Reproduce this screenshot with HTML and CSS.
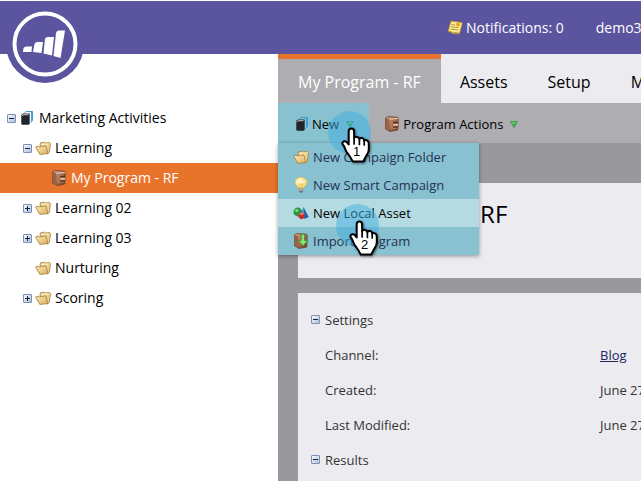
FILE: index.html
```html
<!DOCTYPE html>
<html lang="en">
<head>
<meta charset="utf-8">
<title>My Program - RF</title>
<link rel="stylesheet" href="styles.css">
</head>
<body>
<svg class="defs" width="0" height="0" aria-hidden="true">
  <defs>
    <linearGradient id="g-box" x1="0" y1="0" x2="1" y2="1"><stop offset="0" stop-color="#fff"/><stop offset="1" stop-color="#a9b9d4"/></linearGradient>
    <linearGradient id="g-folder" x1="0" y1="0" x2="1" y2="1"><stop offset="0" stop-color="#fdf0bd"/><stop offset="1" stop-color="#d9ad5c"/></linearGradient>
    <linearGradient id="g-case" x1="0" y1="0" x2="1" y2="1"><stop offset="0" stop-color="#d9a582"/><stop offset="1" stop-color="#6b3a25"/></linearGradient>
    <radialGradient id="g-bulb" cx=".4" cy=".35" r=".7"><stop offset="0" stop-color="#fffde0"/><stop offset="1" stop-color="#f5d35a"/></radialGradient>
    <symbol id="minus" viewBox="0 0 9 9"><rect x=".5" y=".5" width="8" height="8" rx=".5" fill="url(#g-box)" stroke="#7c92b5"/><path d="M2 4.5h5" stroke="#10243f"/></symbol>
    <symbol id="plus" viewBox="0 0 9 9"><rect x=".5" y=".5" width="8" height="8" rx=".5" fill="url(#g-box)" stroke="#7c92b5"/><path d="M2 4.5h5M4.5 2v5" stroke="#10243f"/></symbol>
    <symbol id="books" viewBox="0 0 12 14"><path d="M4 2V1.500Q4.300.5 5.500.5H11.500V9.500L9.500 11.500" fill="none" stroke="#3d9bd6"/><path d="M10.800.7V10" stroke="#3d9bd6" stroke-width="1.400"/><path d="M.3 4.500Q.5 2.500 2.500 2.500H8.700V12.300Q8.700 13.700 7.500 13.700H1.500Q.3 13.700.3 12.500Z" fill="#222528"/><path d="M1.300 4.900Q1.500 3.700 2.800 3.700H7.500" fill="none" stroke="#dfe5e8" stroke-width=".9"/></symbol>
    <symbol id="folder" viewBox="0 0 16 14"><path d="M5 4L5.500 1.800 9.500 1.200 10.500 2 14.500 1.500 15.500 2.500 14.300 11.500 12.500 12.800 6 8Z" fill="#ecd395" stroke="#a37b36" stroke-width=".8"/><path d="M.6 6L3 5.200 4.300 6 10.800 4.800 13 12.600 4.800 13.400Z" fill="url(#g-folder)" stroke="#a37b36" stroke-width=".8"/><path d="M6.500 3.500L13.500 3" stroke="#fff4c8"/></symbol>
    <symbol id="case" viewBox="0 0 14 16">
      <path d="M.6 2L2.500.6 12.500 1.200 13.300 2.300 12.800 14 5 15.500.6 13Z" fill="url(#g-case)" stroke="#6b412d" stroke-width=".8"/>
      <path d="M1 2.300L4.200 3.300V14.800L1 13Z" fill="#9a6347"/>
      <path d="M4.500 3.200L13 2.500" stroke="#f3d2b8"/>
      <path d="M5.500 5H12.300V7.200H9Q7.800 8.700 9 10H12.300V12.500L5.500 13.500Z" fill="#b47a5a"/>
      <path d="M8.300 5.800H13V7.300H8.300ZM8.300 10.300H13V11.800H8.300Z" fill="#50281a"/>
      <path d="M7.500 8.800Q7.700 7.400 9 7.400H13.600V10.200H9Q7.700 10.200 7.500 8.800Z" fill="#e9bfa0" stroke="#6b3a25" stroke-width=".6"/>
    </symbol>
    <symbol id="caret" viewBox="0 0 8 7"><path d="M.5.500H7.500L4 6.500Z" fill="#5cc95a" stroke="#2f9346" stroke-width=".8"/><path d="M5.800 1.500L4 5.500 3.300 4Z" fill="#258c3c"/></symbol>
    <symbol id="bulb" viewBox="0 0 16 16"><path d="M5.300 11.300C5.300 9.500 2 8.200 2 5.300A6 5 0 0 1 14 5.300C14 8.200 10.700 9.500 10.700 11.300Z" fill="url(#g-bulb)" stroke="#dcbc50" stroke-width=".7"/><path d="M7 11L6.300 6.500 8 7.800 9.700 6.500 9 11" fill="none" stroke="#e0ae3f" stroke-width=".6"/><path d="M5.500 11.500H10.500V14L9 15.700H7L5.500 14Z" fill="#72787d"/><path d="M5.500 12.900H10.500" stroke="#d5dadd"/></symbol>
    <symbol id="shapes" viewBox="0 0 16 14"><path d="M10.500 1L15.700 11 11.500 13 7.500 10.500Z" fill="#255ea8"/><path d="M10.500 1L11.500 13 7.500 10.500Z" fill="#5c98d6"/><circle cx="4.800" cy="6" r="4.400" fill="#27984a"/><circle cx="3.700" cy="4.500" r="1.500" fill="#8bdb84"/><path d="M5.500 7.800L8.500 6.500 11.500 7.800V11.300L8.500 13.500 5.500 11.500Z" fill="#c72b29"/><path d="M5.500 7.800L8.500 6.500 11.500 7.800 8.500 9.300Z" fill="#f57662"/></symbol>
    <symbol id="import" viewBox="0 0 14 16"><path d="M.6 2L2.500.6 12.500 1.200 13.300 2.300 12.800 14 5 15.500.6 13Z" fill="url(#g-case)" stroke="#6b412d" stroke-width=".8"/><path d="M1 2.300L4.200 3.300V14.800L1 13Z" fill="#9a6347"/><path d="M7.300 1.200H10.500V7.500H13.700L9 12.800 4.300 7.500H7.300Z" fill="#8be56f" stroke="#2c8c31" stroke-width=".7"/></symbol>
    <symbol id="note" viewBox="0 0 16 15"><path d="M4 1L14.500 2.500Q15.700 3 15 4.500L12.500 13.300 1 11.500Q1.700 10 2 8Z" fill="#fbea8c" stroke="#b98d2c" stroke-width=".8"/><path d="M.8 11.500Q4 11.200 6 13.500L12.500 13.800" fill="#fff7c5" stroke="#b98d2c" stroke-width=".8"/><path d="M4.500 4.500L8 5M4 6.700L11.500 7.700M3.500 9L11 10" stroke="#a88535" stroke-width=".8"/><circle cx="11" cy="4.500" r="2" fill="#f29a38"/></symbol>
    <symbol id="hand" viewBox="0 0 30 38">
      <path d="M7.700 4.500Q7.700 1.500 10.400 1.500T13.100 4.500V11Q14 9.600 16 9.900 18 10.100 18.400 12 19.500 10.500 21.300 11 23 11.500 23.200 13.500 24.300 12.500 26 13.300 27.800 14.200 27.800 16.500V22Q27.800 25 26 27.500 24.500 30 22.300 34.500H11.700Q9.500 30 7.500 27.500 5 25 4 21.500 3.300 19 1.800 17.500 .8 15.500 2.500 14.500 4.700 13.500 6.500 15.800L7.700 17.500Z" fill="#fff" stroke="#000" stroke-width="2" stroke-linejoin="round"/>
      <path d="M13.100 11V17M18.400 12V17.500M23.200 13.500V18" stroke="#000" stroke-width="1.700" stroke-linecap="round"/>
    </symbol>
  </defs>
</svg>

<header class="topbar">
  <a class="logo" href="#" aria-label="Home">
    <svg viewBox="0 0 78 78" aria-hidden="true"><circle cx="39" cy="39" r="39" fill="#5b549f"/><circle cx="39" cy="39" r="30.500" fill="none" stroke="#fff" stroke-width="4"/><path d="M17.500 43Q18.500 41.500 20.500 41.500H26L25.500 47H17Z M28.500 39Q29 37 31.500 37H37L35.500 48 27 47Z M39 34Q39.500 32 42 32H48L46 50.500 37.500 48.500Z M50 28Q50.500 25.500 53 25.500H59L54.500 53 47.500 51Z" fill="#fff"/></svg>
  </a>
  <a class="notice" href="#"><svg class="i-note" aria-hidden="true"><use href="#note"/></svg>Notifications: 0</a>
  <a class="user" href="#">demo3</a>
</header>

<div class="layout">
  <nav class="tree" aria-label="Marketing Activities">
    <a class="node root" href="#"><svg class="i-box"><use href="#minus"/></svg><svg class="i-books"><use href="#books"/></svg><span>Marketing Activities</span></a>
    <a class="node" href="#"><svg class="i-box"><use href="#minus"/></svg><svg class="i-folder"><use href="#folder"/></svg><span>Learning</span></a>
    <a class="node leaf selected" href="#"><svg class="i-case"><use href="#case"/></svg><span>My Program - RF</span></a>
    <a class="node" href="#"><svg class="i-box"><use href="#plus"/></svg><svg class="i-folder"><use href="#folder"/></svg><span>Learning 02</span></a>
    <a class="node" href="#"><svg class="i-box"><use href="#plus"/></svg><svg class="i-folder"><use href="#folder"/></svg><span>Learning 03</span></a>
    <a class="node" href="#"><svg class="i-box"></svg><svg class="i-folder"><use href="#folder"/></svg><span>Nurturing</span></a>
    <a class="node" href="#"><svg class="i-box"><use href="#plus"/></svg><svg class="i-folder"><use href="#folder"/></svg><span>Scoring</span></a>
  </nav>

  <main class="main">
    <nav class="tabs" aria-label="Program">
      <a class="tab active" href="#">My Program - RF</a>
      <a class="tab" href="#">Assets</a>
      <a class="tab" href="#">Setup</a>
      <a class="tab" href="#">M</a>
    </nav>

    <div class="toolbar">
      <button class="tool open" type="button"><svg class="i-books"><use href="#books"/></svg><span>New</span><svg class="i-caret"><use href="#caret"/></svg></button>
      <button class="tool" type="button"><svg class="i-case"><use href="#case"/></svg><span>Program Actions</span><svg class="i-caret"><use href="#caret"/></svg></button>
      <div class="menu">
        <button class="item" type="button"><svg class="i-folder"><use href="#folder"/></svg>New Campaign Folder</button>
        <button class="item" type="button"><svg class="i-menu"><use href="#bulb"/></svg>New Smart Campaign</button>
        <button class="item hover" type="button"><svg class="i-menu"><use href="#shapes"/></svg>New Local Asset</button>
        <button class="item" type="button"><svg class="i-menu"><use href="#import"/></svg>Import Program</button>
      </div>
      <div class="pointer first"><svg><use href="#hand"/></svg><span>1</span></div>
      <div class="pointer second"><svg><use href="#hand"/></svg><span>2</span></div>
    </div>

    <div class="content">
      <section class="card title"><h1>My Program - RF</h1></section>
      <section class="card details">
        <h2><svg class="i-box"><use href="#minus"/></svg>Settings</h2>
        <table>
          <tr><th scope="row">Channel:</th><td><a href="#">Blog</a></td></tr>
          <tr><th scope="row">Created:</th><td>June 27</td></tr>
          <tr><th scope="row">Last Modified:</th><td>June 27</td></tr>
        </table>
        <h2><svg class="i-box"><use href="#minus"/></svg>Results</h2>
      </section>
    </div>
  </main>
</div>
</body>
</html>
```
FILE: styles.css
```css
* { box-sizing: border-box; }

body {
  margin: 0;
  height: 100vh;
  display: flex;
  flex-direction: column;
  overflow: hidden;
  background: #fff;
  color: #000;
  font: 14px/20px "Open Sans", "Noto Sans", sans-serif;
  white-space: nowrap;
}

a { color: inherit; text-decoration: none; }
button { border: 0; margin: 0; background: none; color: inherit; font: inherit; }
svg { flex: none; overflow: visible; }
.defs { position: absolute; }

.i-box { width: 9px; height: 9px; }
.i-books { width: 12px; height: 14px; }
.i-folder { width: 16px; height: 14px; }
.i-menu { width: 16px; height: 16px; }
.i-case { width: 14px; height: 16px; }
.i-caret { width: 8px; height: 7px; }
.i-note { width: 16px; height: 15px; }

.topbar {
  position: relative;
  z-index: 1;
  flex: none;
  height: 54px;
  border-top: 1px solid #fff;
  padding-left: 447px;
  display: flex;
  align-items: center;
  gap: 32px;
  background: #5b549f;
  color: #fff;
}
.logo { position: absolute; left: 6px; top: 4px; width: 78px; height: 78px; }
.logo svg { display: block; width: 100%; height: 100%; }
.notice { display: flex; align-items: center; gap: 3px; }

.layout { flex: 1; display: flex; min-height: 0; }

.tree { flex: none; width: 278px; padding-top: 49px; }
.node { display: flex; align-items: center; height: 30px; padding-left: 23px; gap: 3px; }
.node span { padding-left: 1px; }
.node.root { padding-left: 7px; gap: 5px; }
.node.leaf { padding-left: 52px; gap: 4px; }
.node.selected { background: #e8742c; color: #fff; }

.main { flex: 1; min-width: 0; display: flex; flex-direction: column; background: #99989c; }

.tabs { flex: none; display: flex; height: 49px; background: #ecebf0; font-size: 16px; }
.tab { display: flex; align-items: center; padding: 7px 21px 0 19px; }
.tab.active { padding: 2px 20px 0; border-top: 5px solid #e8742c; background: #aeadb1; color: #fff; }

.toolbar { position: relative; flex: none; display: flex; height: 40px; background: #aeadb1; font-size: 13px; }
.tool { display: flex; align-items: center; gap: 4px; padding: 2px 15px 0 16px; }
.tool.open { background: #88c1cf; padding: 2px 15px 0 18px; }
.tool .i-caret { margin-left: 3px; }

.menu {
  position: absolute;
  left: 0;
  top: 100%;
  width: 201px;
  background: #88c1cf;
  box-shadow: 0 1px 4px rgba(0, 0, 0, .4);
  color: #263159;
}
.item { display: flex; align-items: center; gap: 4px; width: 100%; height: 28px; padding: 0 15px; }
.item.hover { background: #b4dbe2; color: #000; }

.pointer {
  position: absolute;
  width: 43px;
  height: 43px;
  border-radius: 50%;
  background: rgba(66, 174, 226, .5);
  pointer-events: none;
}
.pointer svg { position: absolute; left: 13px; top: 16px; width: 30px; height: 38px; filter: drop-shadow(1px 1px 1px rgba(0, 0, 0, .5)); }
.pointer span { position: absolute; left: 25px; top: 31px; color: #000; font: 13px/20px "Liberation Sans", sans-serif; }
.first { left: 50px; top: 8px; }
.second { left: 58px; top: 101px; }

.content { flex: 1; display: flex; flex-direction: column; gap: 15px; padding: 40px 0 0 20px; min-height: 0; }
.card { background: #ecebf0; }
.title { flex: none; height: 95px; padding: 15px 25px; }
h1 { margin: 0; font-size: 24px; line-height: 32px; font-weight: 400; }
.details { flex: 1; padding: 9px 13px; color: #333; font-size: 13px; min-height: 0; }
h2 { display: flex; align-items: center; gap: 5px; height: 35px; margin: 0; font-size: 13px; font-weight: 400; }
table { border-collapse: collapse; margin-left: 14px; }
th, td { height: 35px; padding: 0; text-align: left; font-weight: 400; }
th { width: 275px; min-width: 275px; }
td a { color: #22285c; text-decoration: underline; }
```
